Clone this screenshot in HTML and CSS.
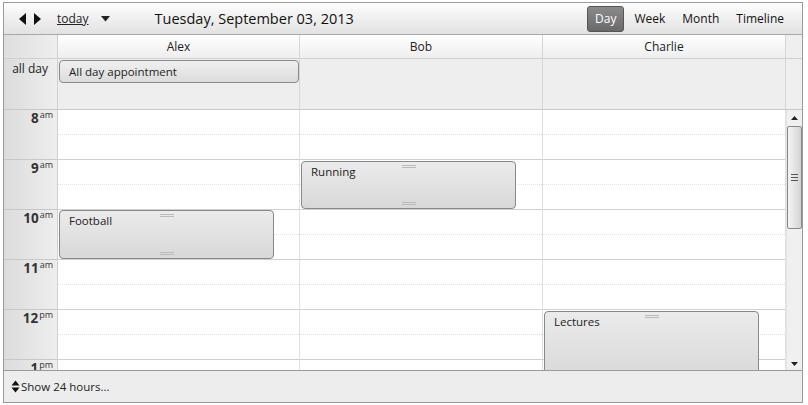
FILE: index.html
```html
<!DOCTYPE html>
<html>
<head>
<meta charset="utf-8">
<link rel="stylesheet" href="styles.css">
</head>
<body>
<div class="cal">
  <div class="toolbar">
    <div class="nav">
      <svg class="arr" width="9" height="12" viewBox="0 0 9 12"><path d="M8 0 L8 12 L1 6 Z" fill="#111"/></svg>
      <svg class="arr" width="9" height="12" viewBox="0 0 9 12"><path d="M1 0 L1 12 L8 6 Z" fill="#111"/></svg>
    </div>
    <a class="today">today</a>
    <svg class="drop" width="9" height="6" viewBox="0 0 9 6"><path d="M0 0 L9 0 L4.5 5.5 Z" fill="#222"/></svg>
    <div class="title">Tuesday, September 03, 2013</div>
    <div class="views">
      <span class="vbtn active">Day</span>
      <span class="vbtn">Week</span>
      <span class="vbtn">Month</span>
      <span class="vbtn">Timeline</span>
    </div>
  </div>
  <div class="head">
    <div class="corner"></div>
    <div class="hcol c1">Alex</div>
    <div class="hcol">Bob</div>
    <div class="hcol">Charlie</div>
    <div class="hscroll"></div>
  </div>
  <div class="allday">
    <div class="alabel">all day</div>
    <div class="acol c1"><div class="aevt">All day appointment</div></div>
    <div class="acol"></div>
    <div class="acol"></div>
    <div class="hscroll"></div>
  </div>
  <div class="body">
    <div class="grid">
      <div class="times">
        <div class="tl">8<sup>am</sup></div>
        <div class="tl">9<sup>am</sup></div>
        <div class="tl">10<sup>am</sup></div>
        <div class="tl">11<sup>am</sup></div>
        <div class="tl">12<sup>pm</sup></div>
        <div class="tl">1<sup>pm</sup></div>
      </div>
      <div class="col c1">
        <div class="slot"></div><div class="slot"></div><div class="slot"></div><div class="slot"></div><div class="slot"></div><div class="slot"></div>
        <div class="evt" style="top:100px;height:49px"><span>Football</span><i class="grip top"></i><i class="grip bot"></i></div>
      </div>
      <div class="col">
        <div class="slot"></div><div class="slot"></div><div class="slot"></div><div class="slot"></div><div class="slot"></div><div class="slot"></div>
        <div class="evt" style="top:51px;height:48px"><span>Running</span><i class="grip top"></i><i class="grip bot"></i></div>
      </div>
      <div class="col">
        <div class="slot"></div><div class="slot"></div><div class="slot"></div><div class="slot"></div><div class="slot"></div><div class="slot"></div>
        <div class="evt" style="top:201px;height:70px"><span>Lectures</span><i class="grip top"></i></div>
      </div>
    </div>
    <div class="scrollbar">
      <svg class="sarrow" width="7" height="4" viewBox="0 0 7 4"><path d="M0 4 L7 4 L3.5 0 Z" fill="#222"/></svg>
      <div class="thumb"><i></i><i></i><i></i></div>
      <div class="sfill"></div>
      <svg class="sarrow" width="7" height="4" viewBox="0 0 7 4"><path d="M0 0 L7 0 L3.5 4 Z" fill="#222"/></svg>
    </div>
  </div>
  <div class="footer">
    <svg width="9" height="13" viewBox="0 0 9 13"><path d="M0.5 5.5 L8.5 5.5 L4.5 0.5 Z M0.5 7.5 L8.5 7.5 L4.5 12.5 Z" fill="#111"/></svg>
    <span>Show 24 hours...</span>
  </div>
</div>
</body>
</html>
```
FILE: styles.css
```css
* { box-sizing: border-box; }
html, body { margin: 0; padding: 0; background: #fff; }
body { font-family: "Open Sans", "Noto Sans", sans-serif; font-size: 11.5px; color: #222; }

.cal {
  margin: 2px 0 0 3px;
  width: 800px;
  height: 401px;
  border: 1px solid #9a9a9a;
  display: flex;
  flex-direction: column;
  overflow: hidden;
}

.toolbar {
  height: 32px;
  flex: none;
  display: flex;
  align-items: center;
  background: linear-gradient(#fdfdfd, #e2e2e2);
  border-bottom: 1px solid #a8a8a8;
  padding-left: 14px;
}
.nav { display: flex; gap: 6px; margin-right: 15px; }
.today { color: #222; text-decoration: underline; font-size: 12px; margin-right: 12px; }
.drop { margin-right: 45px; margin-top: 1px; }
.title { font-size: 14.5px; color: #111; }
.views { margin-left: auto; display: flex; align-items: center; margin-right: 10px; gap: 0; }
.vbtn { padding: 4px 7px; font-size: 12px; color: #111; border: 1px solid transparent; border-radius: 3px; line-height: 16px; margin-left: 1px; }
.vbtn.active { background: linear-gradient(#8a8a8a, #6a6a6a); color: #fff; border-color: #555; margin-right: 1px; padding: 4px 7px; }

.head { height: 24px; flex: none; display: flex; border-bottom: 1px solid #d0d0d0; background: linear-gradient(#ffffff, #eeeeee); }
.corner { width: 54px; flex: none; background: linear-gradient(90deg, #dedede, #eeeeee); border-right: 1px solid #d0d0d0; }
.hcol { width: 243px; flex: none; text-align: center; line-height: 23px; border-right: 1px solid #d6d6d6; color: #222; font-size: 12px; }
.c1 { width: 242px !important; }
.hscroll { flex: 1; background: #efefef; }

.allday { height: 51px; flex: none; display: flex; border-bottom: 1px solid #c8c8c8; background: #eeeeee; }
.alabel { width: 54px; flex: none; background: linear-gradient(90deg, #dcdcdc, #eeeeee); border-right: 1px solid #d0d0d0; text-align: right; padding: 1px 9px 0 0; font-size: 12px; }
.acol { width: 243px; flex: none; border-right: 1px solid #d6d6d6; padding: 1px 0 0 1px; }
.aevt { height: 23px; width: 240px; border: 1px solid #8a8a8a; border-radius: 4px; background: linear-gradient(#f0f0f0, #dcdcdc); padding: 2px 9px; line-height: 17px; }

.body { flex: 1; display: flex; overflow: hidden; border-bottom: 1px solid #9a9a9a; }
.grid { display: flex; width: 782px; flex: none; }
.times { width: 54px; flex: none; background: linear-gradient(90deg, #dcdcdc, #eeeeee); border-right: 1px solid #d0d0d0; }
.tl { height: 50px; border-bottom: 1px solid #c8c8c8; text-align: right; padding: 1px 4px 0 0; font-size: 13.5px; font-weight: bold; color: #333; line-height: 14px; }
.tl sup { font-size: 9px; font-weight: normal; vertical-align: 5px; line-height: 0; margin-left: 1px; }
.col { width: 243px; flex: none; border-right: 1px solid #e0e0e0; position: relative; }
.slot { height: 50px; border-bottom: 1px solid #d0d0d0; background: #fff; position: relative; }
.slot::after { content: ""; position: absolute; left: 0; right: 0; top: 24px; border-top: 1px dotted #e2e2e2; }
.evt {
  position: absolute; left: 1px; width: 215px;
  border: 1px solid #888; border-radius: 4px;
  background: linear-gradient(#ebebeb, #d8d8d8);
  padding: 1px 9px; line-height: 17px;
}
.grip { position: absolute; left: 50%; width: 14px; margin-left: -7px; height: 3px; border-top: 1px solid #bbb; border-bottom: 1px solid #bbb; }
.grip.top { top: 3px; }
.grip.bot { bottom: 3px; }

.scrollbar { flex: 1; background: #f0f0f0; display: flex; flex-direction: column; align-items: center; padding: 6px 0 4px; border-left: 1px solid #e4e4e4; }
.sarrow { flex: none; }
.thumb { margin-top: 6px; width: 15px; height: 103px; border: 1px solid #888; border-radius: 2px; background: linear-gradient(90deg, #f4f4f4, #d4d4d4); display: flex; flex-direction: column; justify-content: center; align-items: center; gap: 2px; }
.thumb i { display: block; width: 7px; height: 1px; background: #555; }
.sfill { flex: 1; }

.footer { height: 31px; flex: none; background: #ededed; display: flex; align-items: center; padding-left: 7px; gap: 1px; font-size: 11.5px; color: #222; }
```
